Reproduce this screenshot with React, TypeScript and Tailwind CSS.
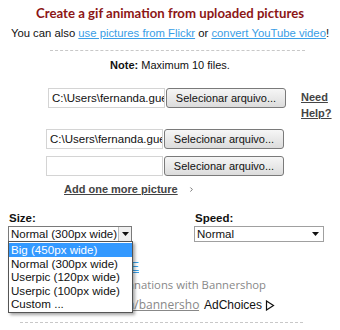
import { ChevronRight } from "lucide-react";

const FileRow = ({ value, shift }: { value: string; shift: string }) => (
  <div className={`flex items-start ${shift}`}>
    <div className="w-[117px] h-[20px] border border-[#d4d4d4] bg-white pl-[3px] text-[11.5px] leading-[18px] text-[#111] overflow-hidden">
      {value}
    </div>
    <button className="ml-[1px] w-[120px] h-[20px] rounded-[3px] border border-[#7a7a7a] bg-gradient-to-b from-[#f6f6f6] to-[#dcdcdc] text-[11px] leading-[18px] text-[#111]">
      Selecionar arquivo...
    </button>
  </div>
);

const sizes = [
  "Big (450px wide)",
  "Normal (300px wide)",
  "Userpic (120px wide)",
  "Userpic (100px wide)",
  "Custom ...",
];

export default function App() {
  return (
    <div className="w-[340px] h-[330px] overflow-hidden bg-white font-['Liberation_Sans',Arial,sans-serif] text-[12px] text-[#111] whitespace-nowrap">
      <h1 className="pt-[4px] text-center font-['Lato',sans-serif] font-bold text-[13.2px] leading-[18px] text-[#8c1616]">
        Create a gif animation from uploaded pictures
      </h1>
      <p className="mt-[3px] text-center text-[11.3px] leading-[16px]">
        You can also{" "}
        <a href="#" className="text-[#3a9ee6] underline">use pictures from Flickr</a>{" "}
        or <a href="#" className="text-[#3a9ee6] underline">convert YouTube video</a>!
      </p>
      <div className="mt-[9px] mx-[50px] w-[255px] border-t border-dashed border-[#c8c8c8]" />
      <p className="mt-[7px] text-center text-[11px] leading-[14px]">
        <b>Note:</b> Maximum 10 files.
      </p>

      <div className="mt-[16px] flex items-start pl-[48px]">
        <FileRow value="C:\Users\fernanda.guerra\Pictures\1.jpg" shift="" />
        <a href="#" className="ml-[15px] mt-[1px] font-bold underline text-[11px] leading-[16px] text-[#444]">
          Need
          <br />
          Help?
        </a>
      </div>
      <div className="mt-[8px]">
        <FileRow value="C:\Users\fernanda.guerra\Pictures\2.jpg" shift="pl-[46px]" />
      </div>
      <div className="mt-[7px]">
        <FileRow value="" shift="pl-[46px]" />
      </div>
      <a href="#" className="mt-[5px] ml-[64px] flex items-center font-bold underline text-[11px] leading-[16px] text-[#444]">
        Add one more picture
        <ChevronRight className="ml-[10px] w-[7px] h-[7px] text-[#666]" strokeWidth={3} />
      </a>

      <div className="relative mt-[14px] flex">
        <div className="ml-[8px] w-[125px]">
          <div className="pl-[1px] font-bold text-[11.5px] leading-[14px]">Size:</div>
          <div className="mt-[1px] flex h-[16px] w-[124px] border border-[#7a7a7a] bg-white">
            <span className="flex-1 pl-[2px] text-[11.5px] leading-[14px] overflow-hidden">Normal (300px wide)</span>
            <span className="w-[13px] border-l border-[#bbb] bg-[#f0f0f0] flex items-center justify-center">
              <svg width="7" height="4" viewBox="0 0 7 4"><path d="M0 0h7L3.5 4z" fill="#111" /></svg>
            </span>
          </div>
        </div>
        <div className="ml-[61px] w-[130px]">
          <div className="pl-[1px] font-bold text-[11.5px] leading-[14px]">Speed:</div>
          <div className="mt-[1px] flex items-center h-[16px] w-[130px] border border-[#a0a0a0] bg-white pl-[2px] pr-[4px]">
            <span className="flex-1 text-[11.5px] leading-[14px]">Normal</span>
            <svg width="7" height="4" viewBox="0 0 7 4"><path d="M0 0h7L3.5 4z" fill="#111" /></svg>
          </div>
        </div>

        <ul className="absolute left-[8px] top-[30px] z-10 w-[125px] border border-[#555] bg-white shadow-[2px_2px_3px_rgba(0,0,0,0.35)] py-[1px] text-[11.6px] leading-[13.6px]">
          {sizes.map((s, i) => (
            <li key={s} className={i === 0 ? "pl-[2px] bg-[#3399ff] text-white" : "pl-[2px]"}>
              {s}
            </li>
          ))}
        </ul>
      </div>

      <div className="mt-[18px] w-[139px] text-right text-[12px] leading-[14px]">
        <a href="#" className="text-[#3a9ee6] underline">GIF FREE</a>
      </div>
      <div className="mt-[3px] flex font-['Open_Sans',sans-serif] text-[11.3px] leading-[16px] text-[#888]">
        <span className="w-[134px] overflow-hidden text-right">Create anima</span>
        <span>nations with Bannershop</span>
      </div>
      <div className="mt-[4px] flex items-center">
        <div className="ml-[8px] w-[192px] overflow-hidden font-['Open_Sans',sans-serif] text-[12px] leading-[16px] text-[#888] underline">
          www.bannershop.com/bannershop
        </div>
        <span className="ml-[4px] text-[12px] leading-[16px] text-[#111]">AdChoices</span>
        <svg className="ml-[3px]" width="10" height="11" viewBox="0 0 10 11">
          <path d="M1.5 1v9l7-4.5z" fill="none" stroke="#111" strokeWidth="1.2" />
        </svg>
      </div>
      <div className="mt-[9px] mx-[20px] w-[283px] border-t border-dashed border-[#c8c8c8]" />
    </div>
  );
}
